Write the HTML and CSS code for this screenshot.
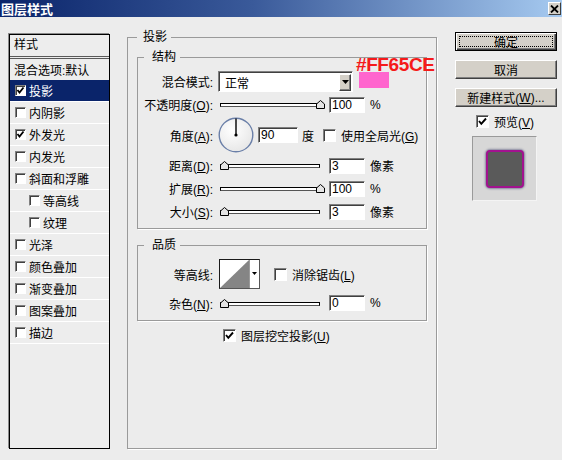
FILE: index.html
```html
<!DOCTYPE html>
<html lang="zh-CN">
<head>
<meta charset="utf-8">
<title>图层样式</title>
<link rel="stylesheet" href="styles.css">
</head>
<body>
<div class="dialog">
  <div class="titlebar">
    <span class="title">图层样式</span>
    <span class="close"><svg width="9" height="8" viewBox="0 0 9 8"><path d="M1 0.5 L8 7.5 M8 0.5 L1 7.5" stroke="#000" stroke-width="1.8"/></svg></span>
  </div>
  <div class="main">
    <div class="list">
      <div class="list-head">样式</div>
      <div class="list-item first">混合选项:默认</div>
      <div class="list-item selected"><span class="cb small"><svg width="9" height="9" viewBox="0 0 9 9"><polyline points="1.5,4 3.5,6.5 7.5,1.5" fill="none" stroke="#000" stroke-width="1.8"/></svg></span>投影</div>
      <div class="list-item"><span class="cb small"></span>内阴影</div>
      <div class="list-item"><span class="cb small"><svg width="9" height="9" viewBox="0 0 9 9"><polyline points="1.5,4 3.5,6.5 7.5,1.5" fill="none" stroke="#000" stroke-width="1.8"/></svg></span>外发光</div>
      <div class="list-item"><span class="cb small"></span>内发光</div>
      <div class="list-item"><span class="cb small"></span>斜面和浮雕</div>
      <div class="list-item sub"><span class="cb small"></span>等高线</div>
      <div class="list-item sub"><span class="cb small"></span>纹理</div>
      <div class="list-item"><span class="cb small"></span>光泽</div>
      <div class="list-item"><span class="cb small"></span>颜色叠加</div>
      <div class="list-item"><span class="cb small"></span>渐变叠加</div>
      <div class="list-item"><span class="cb small"></span>图案叠加</div>
      <div class="list-item"><span class="cb small"></span>描边</div>
    </div>

    <fieldset class="panel">
      <legend>投影</legend>
      <fieldset class="group">
        <legend>结构</legend>
        <div class="row">
          <span class="lbl">混合模式:</span>
          <div class="select"><span class="select-text">正常</span><span class="select-btn"><svg width="7" height="4" viewBox="0 0 7 4"><polygon points="0,0 7,0 3.5,4" fill="#000"/></svg></span></div>
          <div class="swatch"><span class="hex">#FF65CE</span></div>
        </div>
        <div class="row">
          <span class="lbl">不透明度(<u>O</u>):</span>
          <div class="slider"><span class="track"></span><span class="thumb" style="left:96px"><svg width="9" height="9" viewBox="0 0 9 9"><polygon points="0.5,8.5 0.5,4 4.5,0.5 8.5,4 8.5,8.5" fill="#e4e4e4" stroke="#000"/></svg></span></div>
          <span class="field">100</span>
          <span class="unit">%</span>
        </div>
        <div class="row tall">
          <span class="lbl">角度(<u>A</u>):</span>
          <svg class="dial" width="36" height="36" viewBox="0 0 36 36">
            <defs><radialGradient id="g" cx="0.4" cy="0.35" r="0.7"><stop offset="0" stop-color="#ffffff"/><stop offset="1" stop-color="#e6e6e6"/></radialGradient></defs>
            <circle cx="18" cy="18" r="16.8" fill="url(#g)" stroke="#6a7fa8" stroke-width="1.4"/>
            <line x1="18" y1="18" x2="18" y2="1.5" stroke="#000" stroke-width="1.4"/>
            <circle cx="18" cy="18" r="1.6" fill="#000"/>
          </svg>
          <span class="field wide">90</span>
          <span class="unit deg">度</span>
          <span class="cb big gap-cb"></span>
          <span class="cb-text">使用全局光(<u>G</u>)</span>
        </div>
        <div class="row">
          <span class="lbl">距离(<u>D</u>):</span>
          <div class="slider"><span class="track"></span><span class="thumb" style="left:0px"><svg width="9" height="9" viewBox="0 0 9 9"><polygon points="0.5,8.5 0.5,4 4.5,0.5 8.5,4 8.5,8.5" fill="#e4e4e4" stroke="#000"/></svg></span></div>
          <span class="field">3</span>
          <span class="unit">像素</span>
        </div>
        <div class="row">
          <span class="lbl">扩展(<u>R</u>):</span>
          <div class="slider"><span class="track"></span><span class="thumb" style="left:96px"><svg width="9" height="9" viewBox="0 0 9 9"><polygon points="0.5,8.5 0.5,4 4.5,0.5 8.5,4 8.5,8.5" fill="#e4e4e4" stroke="#000"/></svg></span></div>
          <span class="field">100</span>
          <span class="unit">%</span>
        </div>
        <div class="row">
          <span class="lbl">大小(<u>S</u>):</span>
          <div class="slider"><span class="track"></span><span class="thumb" style="left:0px"><svg width="9" height="9" viewBox="0 0 9 9"><polygon points="0.5,8.5 0.5,4 4.5,0.5 8.5,4 8.5,8.5" fill="#e4e4e4" stroke="#000"/></svg></span></div>
          <span class="field">3</span>
          <span class="unit">像素</span>
        </div>
      </fieldset>

      <fieldset class="group quality">
        <legend>品质</legend>
        <div class="row contour-row">
          <span class="lbl">等高线:</span>
          <div class="contour">
            <svg class="contour-img" width="29" height="28" viewBox="0 0 29 28"><rect width="29" height="28" fill="#fff"/><polygon points="0,28 29,0 29,28" fill="#858585"/></svg>
            <span class="contour-btn"><svg width="5" height="3" viewBox="0 0 5 3"><polygon points="0,0 5,0 2.5,3" fill="#000"/></svg></span>
          </div>
          <span class="cb big aa-cb"></span>
          <span class="cb-text">消除锯齿(<u>L</u>)</span>
        </div>
        <div class="row noise-row">
          <span class="lbl">杂色(<u>N</u>):</span>
          <div class="slider"><span class="track"></span><span class="thumb" style="left:0px"><svg width="9" height="9" viewBox="0 0 9 9"><polygon points="0.5,8.5 0.5,4 4.5,0.5 8.5,4 8.5,8.5" fill="#e4e4e4" stroke="#000"/></svg></span></div>
          <span class="field">0</span>
          <span class="unit">%</span>
        </div>
      </fieldset>

      <div class="knockout">
        <span class="cb big"><svg width="11" height="11" viewBox="0 0 11 11"><polyline points="2,5 4.3,7.8 9,2.5" fill="none" stroke="#000" stroke-width="1.9"/></svg></span>
        <span class="cb-text">图层挖空投影(<u>U</u>)</span>
      </div>
    </fieldset>

    <div class="side">
      <div class="btn default">确定</div>
      <div class="btn">取消</div>
      <div class="btn">新建样式(<u>W</u>)...</div>
      <div class="preview-check">
        <span class="cb big"><svg width="11" height="11" viewBox="0 0 11 11"><polyline points="2,5 4.3,7.8 9,2.5" fill="none" stroke="#000" stroke-width="1.9"/></svg></span>
        <span class="cb-text">预览(<u>V</u>)</span>
      </div>
      <div class="preview">
        <div class="preview-square"></div>
      </div>
    </div>
  </div>
</div>
</body>
</html>
```
FILE: styles.css
```css
* { box-sizing: border-box; }
html, body { margin: 0; padding: 0; }
body {
  width: 562px;
  height: 460px;
  overflow: hidden;
  background: #ececec;
  font-family: "Liberation Sans", "Noto Sans CJK SC", sans-serif;
  font-size: 12px;
  color: #000;
}
u { text-decoration: underline; text-underline-offset: 1px; }

.dialog { width: 562px; height: 460px; display: flex; flex-direction: column; }

.titlebar {
  height: 17px;
  flex: none;
  display: flex;
  align-items: center;
  justify-content: space-between;
  background: linear-gradient(to right, #0a246a 0%, #3a5a9a 45%, #a6caf0 100%);
  padding: 0 1px 0 1px;
}
.title {
  color: #fff;
  font-weight: bold;
  font-size: 13px;
  line-height: 17px;
  font-family: "Noto Sans CJK SC", sans-serif;
}
.close {
  width: 13px;
  height: 13px;
  background: #d4d0c8;
  border: 1px solid;
  border-color: #fff #404040 #404040 #fff;
  display: flex;
  align-items: center;
  justify-content: center;
}

.main { flex: 1; display: flex; padding: 0 0 11px 9px; }

/* left style list */
.list {
  width: 101px;
  margin-top: 17px;
  border: 1px solid #000;
  box-shadow: -1px -1px 0 #8a8a8a;
  background: #ededed;
}
.list-head {
  height: 24px;
  line-height: 21px;
  padding-left: 4px;
  border-bottom: 3px double #5a5a5a;
}
.list-item {
  height: 22px;
  display: flex;
  align-items: center;
  padding-left: 5px;
  border-bottom: 1px solid #fff;
  white-space: nowrap;
}
.list-item.first { height: 21px; border-bottom: none; padding-left: 4px; }
.list-item.sub { padding-left: 19px; }
.list-item.selected { background: #0a246a; color: #fff; }

.cb {
  flex: none;
  display: inline-flex;
  align-items: center;
  justify-content: center;
  background: #fff;
  border: 1px solid;
  border-color: #808080 #fff #fff #808080;
  box-shadow: inset 1px 1px 0 #404040;
}
.cb.small { width: 11px; height: 11px; margin-right: 3px; }
.cb.big { width: 13px; height: 13px; }
.cb-text { margin-left: 5px; white-space: nowrap; }

/* main panel */
fieldset { margin: 0; min-width: 0; }
legend { height: 16px; line-height: 16px; padding: 0 4px 0 6px; }
.panel {
  width: 310px;
  margin: 12px 0 0 17px;
  padding: 4px 9px 0 9px;
  border: 1px solid #9a9a9a;
  box-shadow: 1px 1px 0 #fff;
}
.group {
  width: 290px;
  padding: 5px 0 5px 0;
  border: 1px solid #9a9a9a;
  box-shadow: 1px 1px 0 #fff;
}
.group legend { margin-left: 6px; padding: 0 4px 0 8px; }
.group.quality { margin-top: 8px; padding: 5px 0 4px 0; }

.row { height: 23px; display: flex; align-items: center; }
.row.tall { height: 38px; }
.contour-row { height: 32px; }
.noise-row { height: 26px; }
.lbl { width: 75px; flex: none; text-align: right; white-space: nowrap; }

.select {
  width: 135px;
  height: 21px;
  margin-left: 5px;
  display: flex;
  align-items: center;
  justify-content: space-between;
  background: #fff;
  border: 1px solid;
  border-color: #808080 #fff #fff #808080;
  box-shadow: inset 1px 1px 0 #404040;
  padding: 1px 1px 0 6px;
}
.select-btn {
  width: 12px;
  height: 17px;
  display: flex;
  align-items: center;
  justify-content: center;
  background: #d4d0c8;
  border: 1px solid;
  border-color: #fff #404040 #404040 #fff;
  box-shadow: inset -1px -1px 0 #808080;
}
.swatch {
  position: relative;
  width: 30px;
  height: 16px;
  margin-left: 6px;
  margin-top: -4px;
  background: #ff65ce;
}
.hex {
  position: absolute;
  left: -3px;
  top: -16px;
  font-family: "Liberation Sans", sans-serif;
  font-weight: bold;
  font-size: 19px;
  line-height: 18px;
  letter-spacing: -0.4px;
  color: #f51a1a;
  white-space: nowrap;
}

.slider { position: relative; width: 100px; height: 9px; margin-left: 7px; flex: none; }
.track {
  position: absolute;
  left: 0;
  right: 0;
  top: 3px;
  height: 4px;
  background: #fff;
  border: 1px solid #000;
  border-bottom-color: #555;
}
.thumb { position: absolute; top: 0; width: 9px; height: 9px; display: block; line-height: 0; }

.field {
  flex: none;
  width: 36px;
  height: 16px;
  margin-left: 9px;
  padding: 0 0 0 2px;
  line-height: 15px;
  background: #fff;
  border: 1px solid;
  border-color: #808080 #fff #fff #808080;
  box-shadow: inset 1px 1px 0 #404040;
}
.field.wide { width: 40px; margin-left: 4px; }
.unit { margin-left: 5px; white-space: nowrap; }
.unit.deg { margin-left: 4px; }
.dial { margin-left: 5px; flex: none; }
.gap-cb { margin-left: 9px; }

.contour {
  flex: none;
  width: 41px;
  height: 30px;
  margin-left: 6px;
  display: flex;
  border: 1px solid #1a1a1a;
  border-right-color: #555;
  border-bottom-color: #555;
  background: #fff;
}
.contour-img { display: block; }
.contour-btn {
  flex: 1;
  display: flex;
  align-items: center;
  justify-content: center;
  border-left: 1px solid #9a9a9a;
  padding-bottom: 2px;
}
.aa-cb { margin-left: 14px; }

.knockout {
  height: 20px;
  margin-top: 4px;
  padding-left: 86px;
  display: flex;
  align-items: center;
}

/* right column */
.side {
  width: 102px;
  margin: 15px 0 0 18px;
  display: flex;
  flex-direction: column;
  gap: 9px;
}
.btn {
  height: 19px;
  width: 102px;
  flex: none;
  display: flex;
  align-items: center;
  justify-content: center;
  background: #d4d0c8;
  border: 1px solid;
  border-color: #fff #404040 #404040 #fff;
  box-shadow: inset -1px -1px 0 #808080;
  white-space: nowrap;
}
.btn.default {
  position: relative;
  border-color: #000;
  box-shadow: inset 1px 1px 0 #fff, inset -1px -1px 0 #404040, inset -2px -2px 0 #808080;
}
.btn.default::after {
  content: "";
  position: absolute;
  left: 3px;
  top: 3px;
  right: 3px;
  bottom: 3px;
  border: 1px dotted #000;
}
.preview-check {
  height: 20px;
  margin-top: -5px;
  padding-left: 21px;
  display: flex;
  align-items: center;
}
.preview {
  width: 65px;
  height: 65px;
  margin: -4px 0 0 17px;
  display: flex;
  align-items: center;
  justify-content: center;
  background: #d7d7d7;
  border: 1px solid;
  border-color: #9a9a9a #f4f4f4 #f4f4f4 #9a9a9a;
}
.preview-square {
  width: 38px;
  height: 38px;
  background: #5a5a5a;
  border: 2px solid #a2128f;
  border-radius: 4px;
  box-shadow: 0 0 2px 1px rgba(40, 40, 90, 0.45);
}
```
